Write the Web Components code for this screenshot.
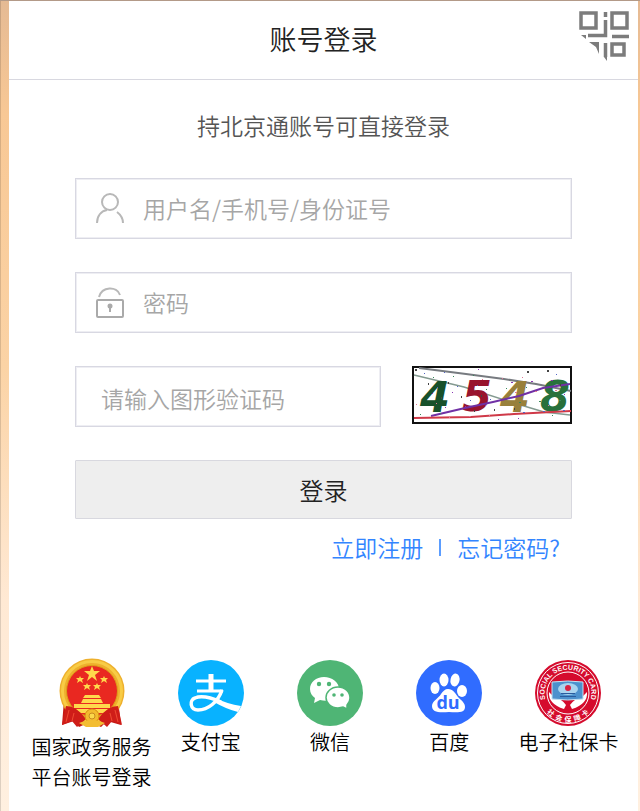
<!DOCTYPE html>
<html lang="zh-CN">
<head>
<meta charset="utf-8">
<meta name="viewport" content="width=device-width, initial-scale=1">
<title>账号登录</title>
<style>
html { min-height: 100%; display: flex; }
body { margin: 0; flex: 1; display: flex; font-family: "Noto Sans CJK SC", sans-serif; font-weight: 350; color: #333; }
login-page { flex: 1; }
</style>
</head>
<body>
<login-page></login-page>
<script>
function define(name, html, setup) {
  const template = document.createElement('template');
  template.innerHTML = '<style>*{box-sizing:border-box}</style>' + html;
  customElements.define(name, class extends HTMLElement {
    constructor() {
      super();
      this.attachShadow({ mode: 'open' }).append(template.content.cloneNode(true));
    }
    connectedCallback() { if (setup) setup(this, this.shadowRoot); }
  });
}

define('qr-toggle', `
<style>
:host{display:block}
button{display:block;border:0;padding:0;background:none;cursor:pointer}
svg{display:block}
</style>
<button type="button" aria-label="扫码登录">
<svg width="54" height="54" viewBox="0 0 54 54" fill="none" stroke="#7c7c7c" stroke-width="3.500">
<rect x="5" y="6" width="15" height="15"/><rect x="36" y="6" width="15" height="15"/><rect x="36" y="37" width="12" height="11"/>
<path d="M29.500 5v5M29.500 13v15.500H12M36 29.500h17M29.500 36v14"/>
<path d="M5 28h5v4zM13 35h10v12l-3-7z" fill="#7c7c7c" stroke="none"/><path d="M28 50h3v4z" fill="#7c7c7c" stroke="none"/>
</svg></button>`);

define('login-header', `
<style>
:host{display:grid;grid-template-columns:1fr auto 1fr;align-items:center;height:79px;border-bottom:1px solid #d8d8e0;background:#fff}
h1{grid-column:2;margin:0;font-size:27px;line-height:40px;font-weight:350;padding-bottom:3px;color:#222}
qr-toggle{justify-self:end;align-self:start;padding:6px 8px 0 0}
</style>
<h1><slot></slot></h1><qr-toggle></qr-toggle>`);

define('text-field', `
<style>
:host{display:block}
label{display:flex;align-items:center;height:61px;border:1px solid #d8d8e2;outline:1px solid #eeeef3;outline-offset:-2px;background:#fff}
slot{display:block;flex:none}
::slotted(svg){display:block;margin:0 17px 0 18px}
input{flex:1;min-width:0;height:100%;border:0;outline:0;padding:0 0 2px;background:none;font:inherit;font-size:23px;color:#333}
:host([plain]) input{padding:2px 0 0 25px}
input::placeholder{color:#a6a6a6;opacity:1}
</style>
<label><slot></slot><input></label>`, (host, root) => {
  const input = root.querySelector('input');
  input.type = host.getAttribute('type') || 'text';
  input.placeholder = host.getAttribute('placeholder');
  input.setAttribute('aria-label', input.placeholder);
});

const noise = Array.from({ length: 60 }, (_, i) => {
  const x = 3 + (i * 37) % 152, y = 3 + (i * 23) % 51;
  return `<rect x="${x}" y="${y}" width="${i % 4 ? 1 : 2}" height="${i % 5 ? 1 : 2}" fill="${['#444', '#8a36b4', '#df7896', '#39895a', '#5364c5'][i % 5]}"/>`;
}).join('');

define('captcha-image', `
<style>
:host{display:block}
button{display:block;width:100%;border:0;padding:0;background:none;cursor:pointer}
svg{display:block;width:100%;height:auto}
text{font:italic bold 43px "DejaVu Sans",sans-serif}
</style>
<button type="button" aria-label="刷新验证码">
<svg viewBox="0 0 160 58">
<rect x="1" y="1" width="158" height="56" fill="#fff" stroke="#111" stroke-width="2"/>
<path d="M2 9l50 12 50 16 30 9 26 3" fill="none" stroke="#849a90" stroke-width="1.500"/>
<path d="M7 2l47 6 38 5 32 5 35 7" fill="none" stroke="#777b80" stroke-width="2"/>
<text x="8" y="46" fill="#17512b">4</text><text x="50" y="45" fill="#98142d">5</text><text x="88" y="46" fill="#98803b">4</text><text x="128" y="45" fill="#28713c">8</text>
<path d="M19 50l34-8 28-6 26-6 24-8 27-4" fill="none" stroke="#7030a5" stroke-width="2"/>
<path d="M2 52l57-1 43-3 57-3" fill="none" stroke="#cf3948" stroke-width="2"/>
${noise}
</svg></button>`);

define('login-form', `
<style>
:host{display:block}
form{display:grid;grid-template-columns:1fr 160px;column-gap:31px;row-gap:33px;align-items:start}
.wide{grid-column:1/-1}
.submit{height:59px;border:1px solid #d8d8df;border-radius:1px;padding:0;background:#eee;font:inherit;font-size:24px;color:#222;cursor:pointer}
nav{display:flex;justify-content:flex-end;align-items:center;gap:16px;padding:11px 12px 2px 0;font-size:23px;line-height:34px}
a{color:#3385ff;text-decoration:none}
i{width:2px;height:17px;background:#5b9dff}
</style>
<form onsubmit="return false">
<text-field class="wide" placeholder="用户名/手机号/身份证号">
<svg slot="" width="32" height="34" viewBox="0 0 32 34" fill="none" stroke="#b8b8b8" stroke-width="2"><circle cx="16" cy="10" r="8"/><path d="M3 31c0-7 4-12 10-13M23 20c4 3 6 6 6 11"/></svg>
</text-field>
<text-field class="wide" type="password" placeholder="密码">
<svg width="32" height="34" viewBox="0 0 32 34" fill="none" stroke="#aaa" stroke-width="2"><rect x="3" y="14" width="26" height="17" rx="1"/><path d="M5 11C8 0 23 0 26 9" stroke="#b8b8b8"/><circle cx="16" cy="20" r="2.500" fill="#aaa" stroke="none"/><path d="M16 20v6"/></svg>
</text-field>
<text-field plain placeholder="请输入图形验证码"></text-field>
<captcha-image></captcha-image>
<button class="submit wide">登录</button>
</form>
<nav><a href="#register">立即注册</a><i></i><a href="#forgot">忘记密码?</a></nav>`);

define('login-provider', `
<style>
:host{display:block}
a{display:flex;flex-direction:column;align-items:center;color:#000;text-decoration:none;text-align:center;font-size:20px;line-height:30px;white-space:nowrap}
.icon{height:69px;display:flex;align-items:center}
:host([tall]) .icon{height:74px;align-items:start}
::slotted(svg){display:block}
</style>
<a href="#login"><span class="icon"><slot name="icon"></slot></span><span><slot></slot></span></a>`);

define('provider-list', `
<style>
:host{display:grid;grid-template-columns:repeat(5,minmax(0,1fr));align-items:start}
</style>
<login-provider tall>
<svg slot="icon" width="70" height="72" viewBox="0 0 70 72">
<path d="M7 42L5 67l12-4 5 6 11-5 11 5 6-6 14 4-3-25z" fill="#c51914"/>
<circle cx="35" cy="33" r="32.500" fill="#eeb02d"/><circle cx="35" cy="33" r="29.500" fill="none" stroke="#f8cc45" stroke-width="3"/>
<circle cx="35" cy="33" r="25.500" fill="#e92821" stroke="#dda019"/>
<g fill="#ffd84c">
<path d="M35 8l2 5h6l-5 4 2 6-5-4-5 4 2-6-5-4h6z"/>
<path d="M23 18l1 2h3l-2 2 1 3-3-2-3 2 1-3-2-2h3zM47 18l1 2h3l-2 2 1 3-3-2-3 2 1-3-2-2h3zM30 25l1 2h3l-2 2 1 3-3-2-3 2 1-3-2-2h3zM40 25l1 2h3l-2 2 1 3-3-2-3 2 1-3-2-2h3z"/>
<path d="M28 37h14l2 3H26zM26 41h18l2 4H24zM17 46h36v4H17zM18 51h34l-5 4H23z"/></g>
<path d="M9 48q11 0 20 13l-9 8-5-6-10 4zM61 48q-11 0-20 13l9 8 5-6 10 4z" fill="#cf1d18"/>
<path d="M12 52l-3 12M17 55l-2 8M58 52l3 12M53 55l2 8" stroke="#ef4b32" fill="none"/>
<circle cx="35" cy="58" r="7" fill="#f3bb2e" stroke="#d88b12"/><circle cx="35" cy="58" r="3" fill="#fbd84b" stroke="#c98a1f"/>
<path d="M22 65q13-6 26 0l-7 4H29z" fill="#f3bd32"/>
</svg>国家政务服务<br>平台账号登录</login-provider>
<login-provider>
<svg slot="icon" width="66" height="66" viewBox="0 0 66 66"><circle cx="33" cy="33" r="33" fill="#08b2ff"/>
<g fill="none" stroke="#fff"><path d="M18 21h30M19 31h26" stroke-width="3"/><path d="M33 14v16" stroke-width="5"/><path d="M44 30c-4 12-14 20-24 20-8 0-9-10-3-12 7-3 17 0 26 4" stroke-width="3.500"/></g>
<path d="M38 38q11 6 25 8l-3 6q-12-3-24-10z" fill="#fff"/></svg>支付宝</login-provider>
<login-provider>
<svg slot="icon" width="66" height="66" viewBox="0 0 66 66"><circle cx="33" cy="33" r="33" fill="#4fb575"/>
<path d="M27 17c-8 0-14 5-14 12 0 4 2 7 5 9l-1 5 6-3c11 3 19-3 19-11 0-7-7-12-15-12z" fill="#fff"/>
<path d="M41 27c-7 0-12 5-12 10.500S34 48 41 48l5-1 4 2v-4c2-2 3-4 3-7 0-6-5-11-12-11z" fill="#fff" stroke="#4fb575" stroke-width="1.500"/>
<g fill="#4fb575"><circle cx="22" cy="24" r="2.200"/><circle cx="32" cy="24" r="2.200"/><circle cx="37" cy="35" r="1.800"/><circle cx="45" cy="35" r="1.800"/></g></svg>微信</login-provider>
<login-provider>
<svg slot="icon" width="66" height="66" viewBox="0 0 66 66"><circle cx="33" cy="33" r="33" fill="#306cff"/>
<g fill="#fff"><ellipse cx="19" cy="28" rx="4.500" ry="6"/><ellipse cx="28" cy="20" rx="4.500" ry="6.500"/><ellipse cx="39" cy="20" rx="4.500" ry="6.500" transform="rotate(12 39 20)"/><ellipse cx="46" cy="31" rx="5" ry="6"/><path d="M32 29c5 0 7 4 10 8 4 4 7 6 7 10 0 5-5 6-16 5-11 1-17 0-17-6 0-5 7-8 9-12 2-3 4-5 7-5z"/></g>
<text x="32" y="49" text-anchor="middle" fill="#306cff" font-family="Open Sans,sans-serif" font-size="18" font-weight="700">du</text></svg>百度</login-provider>
<login-provider>
<svg slot="icon" width="66" height="66" viewBox="0 0 66 66"><defs><path id="top" d="M14 47A23.500 23.500 0 1 1 52 47"/><path id="bottom" d="M4 33A29 29 0 0 0 62 33"/></defs>
<circle cx="33" cy="33" r="33" fill="#d50b2d"/><circle cx="33" cy="33" r="30.500" fill="none" stroke="#fff"/><circle cx="33" cy="33" r="21" fill="#d50b2d" stroke="#fff"/>
<g fill="#fff" font-weight="700"><text font-size="7" font-family="Liberation Sans,sans-serif" text-anchor="middle"><textPath href="#top" startOffset="50%">SOCIAL SECURITY CARD</textPath></text><text font-size="7" font-family="Noto Sans CJK SC,sans-serif" text-anchor="middle"><textPath href="#bottom" startOffset="50%">社&#160;&#160;会&#160;&#160;保&#160;&#160;障&#160;&#160;卡</textPath></text></g>
<path d="M14 32q-1 12 15 17l2-4q-4-6-12-8zM52 32q1 12-15 17l-2-4q4-6 12-8z" fill="#fff"/>
<path d="M17 22q16-2 31 0v17q-15 2-31 0z" fill="#4c91cd" stroke="#c5e1f2"/><ellipse cx="33" cy="29" rx="10" ry="6" fill="#a9d4ef"/><circle cx="33" cy="28" r="3" fill="#d82142"/><path d="M26 33.500h14M25 36.500h16" stroke="#2b5c9c"/></svg>电子社保卡</login-provider>`);

define('login-page', `
<style>
:host{display:flex;flex-direction:column;padding:0 2px 0 9px;border-top:1px solid #b39a88;background:linear-gradient(90deg,#0002 1px,transparent 1px),linear-gradient(#e5ba94,#f8c895 14%,#fbd3a5 45%,#ffe9d4 74%,#fff0e0)}
main{flex:1;background:#fff;padding-bottom:18px}
p{margin:0;padding:28px 0 36px;text-align:center;font-size:23px;line-height:34px;color:#555}
login-form{padding:0 66px}
provider-list{padding:92px 10px 0 23px}
</style>
<main><login-header>账号登录</login-header><p>持北京通账号可直接登录</p><login-form></login-form><provider-list></provider-list></main>`);
</script>
</body>
</html>
